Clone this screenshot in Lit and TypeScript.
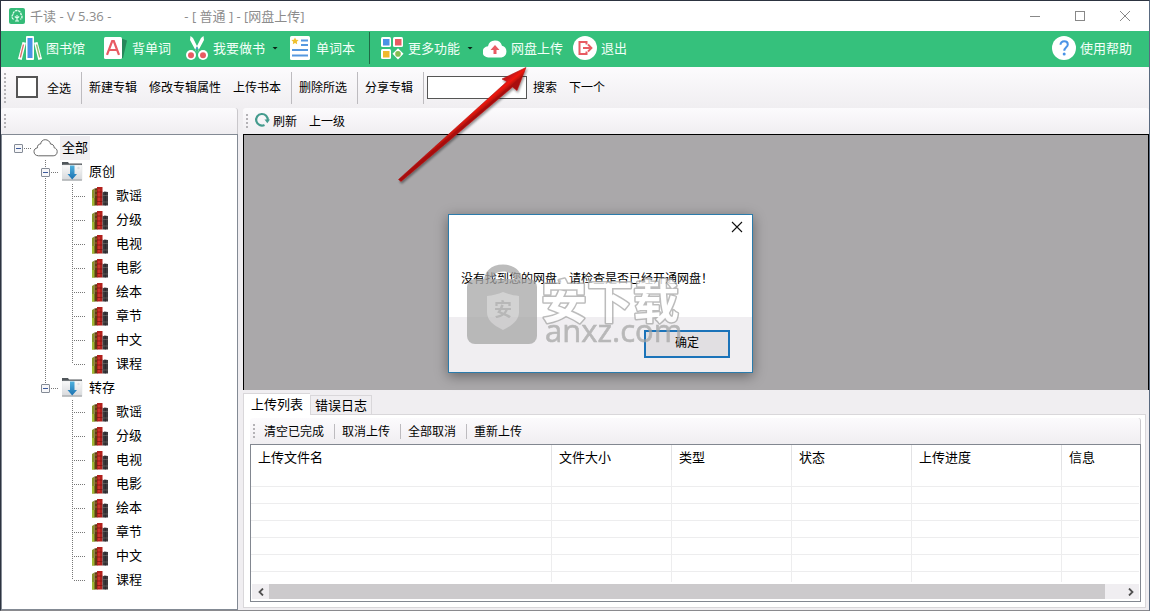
import { LitElement, html, css, svg, nothing } from "lit";
import { customElement, state } from "lit/decorators.js";
import { classMap } from "lit/directives/class-map.js";

const logoIcon = html`<svg width="16" height="16" viewBox="0 0 16 16" aria-hidden="true">
  <rect width="16" height="16" rx="2" fill="#35bb78" />
  <path d="M4.6 11.3A2.6 2.6 0 0 1 3 8.8C3 7.700 3.400 6.900 4 6.500A4 4 0 0 1 12 6.500C12.700 7 13 7.800 13 8.800A2.600 2.600 0 0 1 11.400 11.300" fill="none" stroke="#e6fff1" stroke-width="1.300" stroke-dasharray="2.500 .7" />
  <path d="M8 7v6M5.800 8.500 8 10.200l2.200-1.700M6 13h4" fill="none" stroke="#e6fff1" stroke-width="1.100" />
</svg>`;

const icons: Record<string, unknown> = {
  library: svg`
    <path d="M4.500 6 8 6.800 3.700 24 0 23Z" fill="#fff" />
    <path d="M5.500 8.500 2.300 21.500" stroke="#e1706c" stroke-width="1.300" fill="none" />
    <path d="M16 6.800 19.500 6 24 23 20.300 24Z" fill="#fff" />
    <path d="M18.500 8.500 21.800 21.500" stroke="#8fbf68" stroke-width="1.300" fill="none" />
    <rect x="8" y="0" width="8" height="24" rx="1" fill="#fff" />
    <rect x="9.500" y="2" width="5" height="20" fill="#4a93e6" />`,
  words: svg`
    <path d="M16 2 23 4.500 19 22 14 22Z" fill="#25875a" />
    <rect x="0" y="1" width="18" height="22" rx="1.500" fill="#fff" />
    <path d="M3 18.800 8.200 5h1.600l5.200 13.800M5 14h8" fill="none" stroke="#e85b63" stroke-width="2.200" />`,
  scissors: svg`
    <path d="M5.500 0 8 2l6 12-2 3L5 4ZM18.500 0 16 2l-6 12 2 3L19 4Z" fill="#fff" />
    <circle cx="12" cy="12.500" r="1" fill="#4a93e6" />
    <circle cx="6" cy="19" r="5" fill="#fff" /><circle cx="18" cy="19" r="5" fill="#fff" />
    <circle cx="6" cy="19.200" r="3" fill="#e85b63" /><circle cx="18" cy="19.200" r="3" fill="#e85b63" />`,
  notebook: svg`
    <rect x="2" y="0" width="20" height="24" rx="1.500" fill="#fff" />
    <path d="m7 1.500 1.100 2.300 2.500.3-1.800 1.700.4 2.500L7 7.100 4.800 8.300l.4-2.500-1.800-1.700 2.500-.3Z" fill="#efc02e" />
    <path d="M13 4.500h7M13 9h7M4 14h16M4 19.500h16" stroke="#5598e0" stroke-width="1.800" />`,
  apps: svg`
    <rect x="1" y="1" width="10" height="10" rx="1.500" fill="#fff" /><rect x="3" y="3" width="6.500" height="6.500" fill="#4a93e6" />
    <rect x="13" y="1" width="10" height="10" rx="1.500" fill="#fff" /><rect x="15" y="3" width="6.500" height="6.500" fill="#e85b63" />
    <rect x="1" y="13" width="10" height="10" rx="1.500" fill="#fff" /><rect x="3" y="15" width="6.500" height="6.500" fill="#f0b92d" />
    <path d="m18 12.200 5.500 5.600L18 23.500l-5.500-5.700Z" fill="#fff" /><circle cx="18" cy="17.900" r="2.800" fill="#86bd52" />`,
  cloud: svg`
    <path d="M5.500 21.500A5.600 5.600 0 0 1 5 10.300 7.200 7.200 0 0 1 19 9.800 6 6 0 0 1 18.500 21.500Z" fill="#fff" />
    <path d="m12 9 4.500 5h-3v4h-3v-4h-3Z" fill="#e85b63" />`,
  exit: svg`
    <circle cx="12" cy="12" r="12" fill="#fff" />
    <path d="M13.500 8.500V6H6.500v12h7v-2.500" fill="none" stroke="#e85b63" stroke-width="2" />
    <path d="M10 12h8M15 8.500l3.500 3.500-3.500 3.500" fill="none" stroke="#e85b63" stroke-width="1.800" />`,
  help: svg`
    <circle cx="12" cy="12" r="12" fill="#fff" />
    <path d="M8.500 8.800c0-2.200 1.500-3.600 3.700-3.600s3.600 1.300 3.600 3.200c0 2.800-3.500 2.900-3.500 6.300" fill="none" stroke="#4a93e6" stroke-width="2" />
    <circle cx="12.200" cy="18" r="1.500" fill="#4a93e6" />`,
};

const icon = (name: string) =>
  html`<svg width="24" height="24" viewBox="0 0 24 24" aria-hidden="true">${icons[name]}</svg>`;

const cloudGlyph = html`<svg width="25" height="18" viewBox="0 0 25 18" aria-hidden="true">
  <path d="M5.500 16.800C2.500 16.600 1 15 1 12.500c0-2 1.300-3.300 3.500-3.700C4.200 6.500 5.500 5 7.600 5c.5-2.800 2.200-4.300 4.600-4.300 2.600 0 4.800 1.700 5.400 4.400 2.200-.1 3.600 1.500 3.500 3.600 2 .5 3.100 2 3.100 3.900 0 2.500-1.600 4.200-4 4.200Z" fill="#fff" stroke="#666" stroke-width="1" />
</svg>`;

const folderGlyph = html`<svg width="21" height="20" viewBox="0 0 21 20" aria-hidden="true">
  <defs><linearGradient id="f" x1="0" y1="0" x2="0" y2="1"><stop offset="0" stop-color="#fafafa" /><stop offset="1" stop-color="#d5d7da" /></linearGradient>
  <linearGradient id="a" x1="0" y1="0" x2="0" y2="1"><stop offset="0" stop-color="#4fb2df" /><stop offset="1" stop-color="#1a70b0" /></linearGradient></defs>
  <path d="M0 0h6l1 1.500h13V3H0Z" fill="#50565a" />
  <rect x="0" y="3" width="20" height="15.500" rx="1" fill="url(#f)" stroke="#dfe1e3" stroke-width=".5" />
  <path d="M0 18h20" stroke="#9a9da0" />
  <path d="M8 3.500h4.500V12h2.500l-4.800 5.500L5.500 12H8Z" fill="url(#a)" />
  <circle cx="16.500" cy="6" r="1.200" fill="#dcdfe2" />
</svg>`;

const bookGlyph = html`<svg width="16" height="19" viewBox="0 0 16 19" aria-hidden="true">
  <path d="M0 3 2.500 1.500V18.500H0Z" fill="#86942a" /><path d="M0 11h3v7.500H0Z" fill="#9db832" />
  <path d="M2.500 1.500 5.500 1V18.500H2.500Z" fill="#5f3a14" />
  <path d="M2.500 4h3M2.500 8h3" stroke="#a8782c" stroke-width=".8" />
  <rect x="5" y="0" width="5.500" height="18.500" fill="#b3201c" />
  <path d="M7 2v15" stroke="#df4238" stroke-width="1.200" />
  <path d="M5 5h5.500M5 10h5.500M5 14.500h5.500" stroke="#7a1210" stroke-width=".7" />
  <path d="M10.500 5.500 12.500 4.500 16 5V18.500H10.500Z" fill="#3b393c" />
  <path d="M13.300 5v13.500" stroke="#242225" stroke-width=".8" />
  <path d="M10.500 8.500H16M10.500 15H16" stroke="#77706d" stroke-width=".6" />
</svg>`;

const refreshGlyph = html`<svg width="16" height="16" viewBox="0 0 16 16" aria-hidden="true">
  <path d="M13.700 8.500A5.800 5.800 0 1 0 10.500 13" fill="none" stroke="#459b8e" stroke-width="2.200" />
  <path d="M10.500 7.500H16l-2.700 3.800Z" fill="#459b8e" />
</svg>`;

type Guide = "blank" | "pass" | "tee" | "elbow";
interface TreeRow { guides: Guide[]; glyph: unknown; label: string; toggle?: boolean; selected?: boolean; }

const leaves = ["歌谣", "分级", "电视", "电影", "绘本", "章节", "中文", "课程"];
const branch = (label: string, last: boolean): TreeRow[] => [
  { guides: ["blank", last ? "elbow" : "tee"], glyph: folderGlyph, label, toggle: true },
  ...leaves.map((leaf, i): TreeRow => ({
    guides: ["blank", last ? "blank" : "pass", i === leaves.length - 1 ? "elbow" : "tee"],
    glyph: bookGlyph,
    label: leaf,
  })),
];
const treeRows: TreeRow[] = [
  { guides: ["blank"], glyph: cloudGlyph, label: "全部", toggle: true, selected: true },
  ...branch("原创", false),
  ...branch("转存", true),
];

const reset = css`
  * { box-sizing: border-box; }
  button {
    appearance: none; border: 0; margin: 0; padding: 0; background: none;
    font: inherit; color: inherit; white-space: nowrap; cursor: default;
  }
  svg { display: block; flex: none; }
`;

@customElement("category-tree")
export class CategoryTree extends LitElement {
  static styles = [reset, css`
    :host {
      display: block; flex: 1; min-height: 0; padding: 1px 3px; background: #fff;
      border: 1px solid #838a94; font-size: 13px; color: #000;
    }
    .rows { list-style: none; margin: 0; padding: 0; }
    .row { display: flex; align-items: center; height: 24px; }
    .guide { display: grid; place-items: center; position: relative; width: 27px; height: 24px; flex: none; }
    .guide::before, .guide::after { content: ""; position: absolute; }
    .pass::before, .tee::before, .elbow::before {
      left: 13px; top: 0; width: 1px; height: 24px;
      background: repeating-linear-gradient(#777 0 1px, transparent 1px 2px);
    }
    .elbow::before { height: 12px; }
    .lead::after {
      left: 14px; right: 0; top: 12px; height: 1px;
      background: repeating-linear-gradient(90deg, transparent 0 1px, #777 1px 2px);
    }
    .toggle {
      position: relative; z-index: 1; width: 9px; height: 9px;
      border: 1px solid #848b96; border-radius: 1px;
      background: linear-gradient(#3c5a9c, #3c5a9c) center / 5px 1px no-repeat, #f7f7f9;
    }
    .glyph { display: grid; place-items: center; width: 27px; height: 24px; flex: none; }
    .label { margin-left: 1px; padding: 0 2px; line-height: 21px; height: 24px; }
    .selected { background: #f0eef1; }
  `];

  render() {
    return html`<ul class="rows" role="tree">
      ${treeRows.map((row) => html`
        <li class="row" role="treeitem" aria-selected=${row.selected ? "true" : "false"}>
          ${row.guides.map((guide, i) => {
            const lead = i === row.guides.length - 1;
            return html`<span class=${classMap({ guide: true, [guide]: true, lead })}>
              ${lead && row.toggle ? html`<button class="toggle" aria-label="折叠"></button>` : nothing}
            </span>`;
          })}
          <span class="glyph">${row.glyph}</span>
          <span class=${classMap({ label: true, selected: !!row.selected })}>${row.label}</span>
        </li>`)}
    </ul>`;
  }
}

@customElement("upload-table")
export class UploadTable extends LitElement {
  static styles = [reset, css`
    :host {
      display: flex; flex-direction: column; flex: 1; min-height: 0;
      border: 1px solid #828790; background: #fff; padding-bottom: 2px; font-size: 13px;
    }
    .clip { flex: 1; min-height: 0; overflow: hidden; padding-right: 1px; }
    .grid { width: 100%; table-layout: fixed; border-collapse: separate; border-spacing: 0; }
    .name { width: 301px; }
    .short { width: 120px; }
    .long { width: 150px; }
    .head {
      height: 25px; padding: 0 0 2px 7px; text-align: left; font-weight: 400; line-height: 22px;
      border-right: 1px solid #e2e2e4;
    }
    .cell { height: 17px; padding: 0; border-right: 1px solid #ededee; border-bottom: 1px solid #ededee; }
    .head:last-child, .cell:last-child { border-right: 0; }
    .scroll { display: flex; height: 15px; flex: none; margin: 2px 1px 0; background: #f0eef1; }
    .arrow { display: grid; place-items: center; width: 17px; height: 15px; flex: none; }
    .track { flex: 1; }
    .thumb { width: 98%; height: 15px; background: #cccacc; }
  `];

  render() {
    const columns = [["上传文件名", "name"], ["文件大小", "short"], ["类型", "short"], ["状态", "short"], ["上传进度", "long"], ["信息", ""]];
    return html`
      <div class="clip">
        <table class="grid">
          <thead><tr>${columns.map(([title, size]) => html`<th class="head ${size}" scope="col">${title}</th>`)}</tr></thead>
          <tbody>${Array.from({ length: 7 }, () => html`<tr>${columns.map(() => html`<td class="cell"></td>`)}</tr>`)}</tbody>
        </table>
      </div>
      <div class="scroll">
        <button class="arrow" aria-label="向左"><svg width="8" height="8" viewBox="0 0 8 8"><path d="M6 .5 2.500 4 6 7.500" fill="none" stroke="#505050" stroke-width="1.800" /></svg></button>
        <div class="track"><div class="thumb"></div></div>
        <button class="arrow" aria-label="向右"><svg width="8" height="8" viewBox="0 0 8 8"><path d="M2 .5 5.500 4 2 7.500" fill="none" stroke="#505050" stroke-width="1.800" /></svg></button>
      </div>`;
  }
}

@customElement("message-dialog")
export class MessageDialog extends LitElement {
  static styles = [reset, css`
    :host { display: block; font-size: 12px; color: #000; }
    .box {
      width: 305px; background: #fff; border: 1px solid #2b7bab;
      box-shadow: 0 3px 12px rgba(0, 0, 0, 0.4);
    }
    .top { display: flex; justify-content: flex-end; padding: 6px 9px 0; }
    .close { display: grid; place-items: center; width: 12px; height: 12px; }
    .text { margin: 0; padding: 35px 12px 30px; line-height: 19px; white-space: nowrap; }
    .foot { display: flex; justify-content: flex-end; padding: 13px 22px 14px; background: #f0eef1; }
    .ok { width: 86px; height: 28px; padding-bottom: 4px; line-height: 20px; border: 2px solid #1b73b9; background: #e1dfe2; }
  `];

  render() {
    return html`<div class="box" role="alertdialog" aria-labelledby="msg">
      <div class="top"><button class="close" aria-label="关闭">
        <svg width="12" height="12" viewBox="0 0 12 12"><path d="m1 1 10 10M11 1 1 11" stroke="#111" stroke-width="1.100" /></svg>
      </button></div>
      <p class="text" id="msg">没有找到您的网盘，请检查是否已经开通网盘！</p>
      <div class="foot"><button class="ok">确定</button></div>
    </div>`;
  }
}

@customElement("app-root")
export class AppRoot extends LitElement {
  @state() private tab = 0;

  static styles = [reset, css`
    :host { display: block; font-family: "Noto Sans CJK SC", "Noto Sans", sans-serif; font-size: 12px; color: #000; }
    .window {
      position: relative; display: flex; flex-direction: column; height: 100vh; min-height: 560px;
      border: 1px solid #2c3340; border-right-color: #5a6a80; border-bottom-color: #8a8a8e; background: #f0eef1;
    }
    .titlebar {
      display: flex; align-items: center; height: 30px; flex: none; padding: 0 8px 1px; background: #fff;
      color: #8c8c8c; font-family: "Open Sans", "Noto Sans CJK SC", sans-serif; font-size: 13px; white-space: pre;
    }
    .title { display: flex; gap: 73px; margin-left: 5px; }
    .controls { display: flex; gap: 23px; margin-left: auto; margin-right: 5px; }
    .control { display: grid; place-items: center; width: 22px; height: 22px; }

    .ribbon {
      display: flex; align-items: center; height: 36px; flex: none; padding: 0 17px 2px;
      background: #35c17c; color: #f2fff8; font-size: 13px;
    }
    .tool { display: flex; align-items: center; gap: 4px; height: 32px; margin-right: 10px; }
    .tool.wide { margin-right: 19px; }
    .tool.mid { margin-right: 14px; }
    .tool.end { margin: 0 0 0 auto; }
    .name { padding-bottom: 1px; }
    .caret { width: 6px; height: 3px; margin-left: 3px; background: #0b2417; clip-path: polygon(0 0, 100% 0, 50% 100%); }
    .rule { width: 1px; height: 32px; margin: 0 10px 0 4px; background: #1f6b46; }

    .strip {
      display: flex; align-items: center; flex: none;
      background: linear-gradient(#fcfbfd, #f0eef1); border-radius: 3px 3px 0 0;
    }
    .actions { height: 41px; padding-left: 3px; }
    .sub { height: 26px; padding-left: 3px; }
    .grip { width: 2px; background: repeating-linear-gradient(#b4b2b6 0 2px, transparent 2px 4px); }
    .grip.tall { height: 30px; }
    .grip.short { height: 14px; }
    .action { display: flex; align-items: center; gap: 3px; height: 24px; padding: 0 6px 2px; }
    .split { width: 1px; height: 32px; margin: 0 1px 0 4px; background: #bdbbbf; }
    .split.low { height: 15px; }
    .all { display: flex; align-items: center; gap: 9px; margin: 0 6px 0 10px; padding-bottom: 1px; }
    .check { appearance: none; width: 22px; height: 22px; margin: 0; border: 2px solid #555; background: #fff; }
    .find { width: 100px; height: 23px; margin-left: 2px; border: 1px solid #555; background: #fff; font: inherit; padding: 0 4px; }

    .main {
      display: grid; grid-template: minmax(0, 1fr) / 237px minmax(0, 1fr); column-gap: 5px;
      flex: 1; min-height: 0;
    }
    .side, .work { display: flex; flex-direction: column; min-width: 0; min-height: 0; }
    .side .sub { border-right: 1px solid #c9c7cb; }
    .canvas { flex: 4 0 256px; background: #aaa8aa; border: 1px solid #000; border-bottom: 0; }

    .uploads { display: flex; flex-direction: column; flex: 3 0 220px; min-height: 0; padding: 3px 3px 2px 0; }
    .tabs { display: flex; align-items: flex-end; height: 21px; flex: none; font-size: 13px; }
    .tab {
      height: 19px; padding: 0 4px; line-height: 18px; background: #f0eef1;
      border: 1px solid #d9d7da; border-bottom: 0;
    }
    .tab.on { height: 22px; padding: 0 7px 2px; margin-bottom: -1px; background: #fff; border-right: 0; z-index: 1; }
    .pane {
      display: flex; flex-direction: column; flex: 1; min-height: 0; padding: 3px 4px 5px 6px;
      background: #fff; border: 1px solid #d9d7da;
    }
    .queue { height: 26px; padding-left: 3px; border-right: 1px solid #c9c7cb; }
    .queue .action:first-of-type { margin-left: 3px; }

    .dialog { position: absolute; left: 447px; top: 213px; }
    .overlay { position: absolute; left: 0; top: 0; pointer-events: none; }
    .mark { font-family: "Open Sans", "Noto Sans", sans-serif; font-size: 31px; }
    .brand { font-family: "Noto Sans CJK SC", sans-serif; font-size: 46px; font-weight: 700; stroke-linejoin: round; paint-order: stroke; }
    .seal { font-family: "Noto Sans CJK SC", sans-serif; font-size: 18px; font-weight: 700; }
  `];

  private tool(name: string, label: string, extra = "", menu = false) {
    return html`<button class="tool ${extra}">${icon(name)}<span class="name">${label}</span>${menu ? html`<span class="caret"></span>` : nothing}</button>`;
  }

  private action(label: string) {
    return html`<button class="action">${label}</button>`;
  }

  render() {
    return html`<div class="window">
      <header class="titlebar">
        ${logoIcon}
        <div class="title"><span>千读 - V 5.36 -</span><span>- [ 普通 ] - [网盘上传]</span></div>
        <div class="controls">
          <button class="control" aria-label="最小化"><svg width="12" height="12"><path d="M1 6.500h10" stroke="#888" /></svg></button>
          <button class="control" aria-label="最大化"><svg width="12" height="12"><rect x="1.500" y="1.500" width="9" height="9" fill="none" stroke="#888" /></svg></button>
          <button class="control" aria-label="关闭"><svg width="12" height="12"><path d="m1 1 10 10M11 1 1 11" stroke="#888" /></svg></button>
        </div>
      </header>

      <nav class="ribbon">
        ${this.tool("library", "图书馆", "wide")}
        ${this.tool("words", "背单词", "mid")}
        ${this.tool("scissors", "我要做书", "", true)}
        ${this.tool("notebook", "单词本")}
        <span class="rule"></span>
        ${this.tool("apps", "更多功能", "", true)}
        ${this.tool("cloud", "网盘上传")}
        ${this.tool("exit", "退出")}
        ${this.tool("help", "使用帮助", "end")}
      </nav>

      <div class="strip actions">
        <span class="grip tall"></span>
        <label class="all"><input class="check" type="checkbox" /><span>全选</span></label>
        <span class="split"></span>
        ${["新建专辑", "修改专辑属性", "上传书本"].map((t) => this.action(t))}
        <span class="split"></span>
        ${this.action("删除所选")}
        <span class="split"></span>
        ${this.action("分享专辑")}
        <span class="split"></span>
        <input class="find" type="text" aria-label="搜索" />
        ${this.action("搜索")}${this.action("下一个")}
      </div>

      <div class="main">
        <aside class="side">
          <div class="strip sub"><span class="grip short"></span></div>
          <category-tree></category-tree>
        </aside>
        <section class="work">
          <div class="strip sub">
            <span class="grip short"></span>
            <button class="action">${refreshGlyph}<span>刷新</span></button>
            ${this.action("上一级")}
          </div>
          <div class="canvas"></div>
          <div class="uploads">
            <div class="tabs" role="tablist">
              ${["上传列表", "错误日志"].map((t, i) => html`<button role="tab" aria-selected=${i === this.tab ? "true" : "false"}
                class=${classMap({ tab: true, on: i === this.tab })} @click=${() => (this.tab = i)}>${t}</button>`)}
            </div>
            <div class="pane">
              <div class="strip queue">
                <span class="grip short"></span>
                ${["清空已完成", "取消上传", "全部取消", "重新上传"].map((t, i) =>
                  html`${i ? html`<span class="split low"></span>` : nothing}${this.action(t)}`)}
              </div>
              <upload-table></upload-table>
            </div>
          </div>
        </section>
      </div>

      <message-dialog class="dialog"></message-dialog>

      <svg class="overlay" width="760" height="380" viewBox="1 1 760 380" aria-hidden="true">
        <defs>
          <linearGradient id="red" gradientUnits="userSpaceOnUse" x1="458" y1="120" x2="463" y2="126"><stop offset="0" stop-color="#c81414" /><stop offset=".5" stop-color="#f01810" /><stop offset="1" stop-color="#a81010" /></linearGradient>
          <filter id="soft" x="-20%" y="-20%" width="140%" height="140%"><feDropShadow dx="1" dy="2" stdDeviation="1.200" flood-opacity=".4" /></filter>
        </defs>
        <g opacity=".75">
          <path d="M484 281c0-9 7-16.500 19-16.500s19 7.500 19 16.500h-7c-1-6-5-9.500-12-9.500s-11 3.500-12 9.500Z" fill="#a6a6a6" />
          <rect x="467" y="279" width="70" height="65" rx="8" fill="#a6a6a6" />
          <path d="M487 296c6-.5 11-2 16-4 5 2 10 3.500 16 4v16c0 8-6 13-16 18-10-5-16-10-16-18Z" fill="#c4c4c4" />
          <text class="seal" x="494" y="316" fill="#a0a0a0">安</text>
          <text class="brand" x="541" y="318" fill="#fff" stroke="#a6a6a6" stroke-width="3">安下载</text>
          <text class="mark" x="545" y="342" fill="#a6a6a6" stroke="#a6a6a6" stroke-width=".6">anxz.com</text>
        </g>
        <path d="M398.500 179.500 507 81.500l-5-2.500L526 67.500 517 90.500l-4.500-3.500L401 181.500Z" fill="url(#red)" stroke="#b01212" stroke-width=".6" filter="url(#soft)" />
      </svg>
    </div>`;
  }
}
